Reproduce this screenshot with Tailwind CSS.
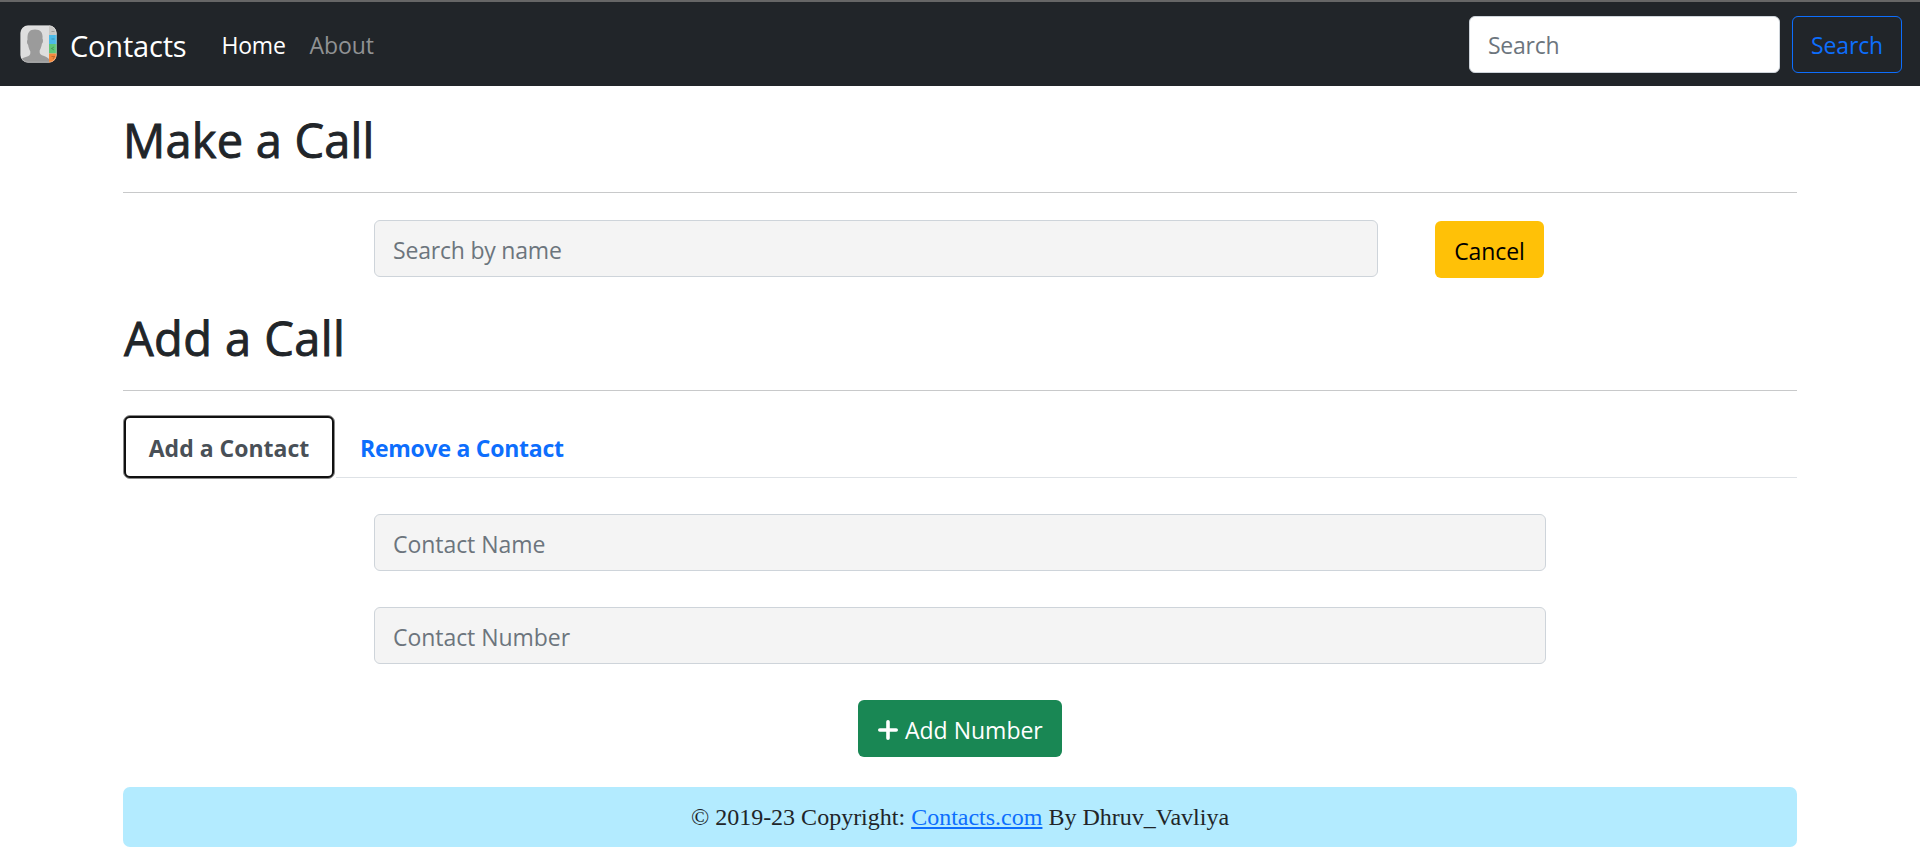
<!DOCTYPE html>
<html lang="en">
<head>
<meta charset="utf-8">
<title>Contacts</title>
<script src="https://cdn.jsdelivr.net/npm/@tailwindcss/browser@4"></script>
</head>
<body class="bg-white text-[#212529] text-[23px] leading-[36px] tracking-[-0.1px] font-['Open_Sans',sans-serif] overflow-hidden">
<nav class="flex h-[86px] items-center border-t-2 border-[#666666] bg-[#212529] pl-5 pr-[18px] pt-[2px]">
  <a href="#" class="flex items-center text-white">
    <svg class="-mt-[3px] h-[38px] w-[37px]" viewBox="0 0 37 38">
      <defs><clipPath id="book"><rect x=".5" y=".5" width="36" height="37" rx="7.5"/></clipPath></defs>
      <g clip-path="url(#book)">
        <rect width="37" height="38" fill="#dedede"/>
        <path d="M0 38v-3c2-2.200 5-2.800 8-3.800 2-.7 2.600-2 2.300-5-1.300-2-1.800-4-2.200-6.400-1.300-1-1.400-4-.6-5C7 7.500 9.500 4.500 15 4.500s8 3 7.500 9.300c.8 1 .7 4-.6 5-.4 2.400-.9 4.400-2.200 6.400-.3 3 .3 4.300 2.300 5 3 1 5 1.600 7 3.800v4z" fill="#9b9b9b"/>
        <path d="M29 0h8v10h-8z" fill="#c9c8c5"/>
        <path d="M29 10h8v9h-8z" fill="#4cbbe8"/>
        <path d="M29 19h8v9.500h-8z" fill="#5fc878"/>
        <path d="M29 28.500h8V38h-8z" fill="#f5893b"/>
        <path d="M31.500 6.500h3M31.500 14h3M34 22l-2.500 1.500L34 25M31.500 31.500h3L33 34" fill="none" stroke="#000" stroke-opacity=".22"/>
      </g>
      <rect x=".8" y=".8" width="35.400" height="36.400" rx="7.200" fill="none" stroke="#fff" stroke-opacity=".25"/>
    </svg>
    <span class="ml-[13px] text-[29px] leading-[45px] tracking-[-0.2px]">Contacts</span>
  </a>
  <a href="#" class="ml-[35px] text-white tracking-[-0.2px]">Home</a>
  <a href="#" class="ml-6 text-[#909294]">About</a>
  <form class="-mt-[1px] ml-auto flex gap-3">
    <div class="h-[57px] w-[311px] rounded-[6px] border border-[#ced4da] bg-white px-[18px] pt-[10px] tracking-[-0.25px] text-[#6c757d]">Search</div>
    <div class="h-[57px] w-[110px] rounded-[6px] border border-[#0d6efd] pt-[10px] text-center text-[#0d6efd]">Search</div>
  </form>
</nav>

<main class="mx-auto w-[1674px] pt-[25px]">
  <h2 class="h-[58px] text-[47px] font-medium leading-[58px] tracking-[0.2px] [-webkit-text-stroke:0.9px_#212529]">Make a Call</h2>
  <hr class="mt-[23px] border-[#c8c9ca]">
  <div class="mt-[27px] flex pl-[251px]">
    <div class="h-[57px] w-[1004px] rounded-[6px] border border-[#ced4da] bg-[#f4f4f4] px-[18px] pt-[11px] tracking-[-0.2px] text-[#6c757d]">Search by name</div>
    <button class="ml-[57px] mt-px h-[57px] w-[109px] rounded-[6px] bg-[#ffc107] pt-[3px] text-black">Cancel</button>
  </div>
  <h2 class="mt-[31px] h-[58px] pl-px text-[47px] font-medium leading-[58px] tracking-[0.4px] [-webkit-text-stroke:0.9px_#212529]">Add a Call</h2>
  <hr class="mt-[23px] border-[#c8c9ca]">

  <div class="mt-6 flex h-[64px] font-bold">
    <div class="h-[64px] w-[212px] rounded-[7px] border border-[#8a8a8a] bg-[#8a8a8a]">
      <div class="h-full rounded-[6px] border-2 border-[#101010] bg-white pt-[12px] text-center tracking-normal text-[#495057]">Add a Contact</div>
    </div>
    <div class="mb-[1px] ml-[1px] flex-1 border-b border-[#dee2e6] pl-[24px] pt-[15px] tracking-[-0.25px] text-[#0d6efd]">Remove a Contact</div>
  </div>

  <div class="mt-[35px] flex flex-col items-center gap-9">
    <div class="h-[57px] w-[1172px] rounded-[6px] border border-[#ced4da] bg-[#f4f4f4] px-[18px] pt-[11px] tracking-[-0.05px] text-[#6c757d]">Contact Name</div>
    <div class="h-[57px] w-[1172px] rounded-[6px] border border-[#ced4da] bg-[#f4f4f4] px-[18px] pt-[11px] tracking-[-0.05px] text-[#6c757d]">Contact Number</div>
    <button class="flex h-[57px] w-[204px] rounded-[6px] bg-[#198754] pl-5 pt-[12px] text-white">
      <svg class="mt-2 h-5 w-5" viewBox="0 0 20 20"><path d="M10 1.800v16.400M1.800 10h16.400" stroke="#fff" stroke-width="3.600" stroke-linecap="round"/></svg>
      <span class="ml-[7px] tracking-normal">Add Number</span>
    </button>
  </div>
  <footer class="mt-[30px] h-[60px] rounded-[7px] bg-[#b3ebff] text-center font-['Liberation_Serif',serif] text-[24px] leading-[60px] tracking-normal">© 2019-23 Copyright: <a href="#" class="text-[#0d6efd] underline">Contacts.com</a> By Dhruv_Vavliya</footer>
</main>
</body>
</html>
